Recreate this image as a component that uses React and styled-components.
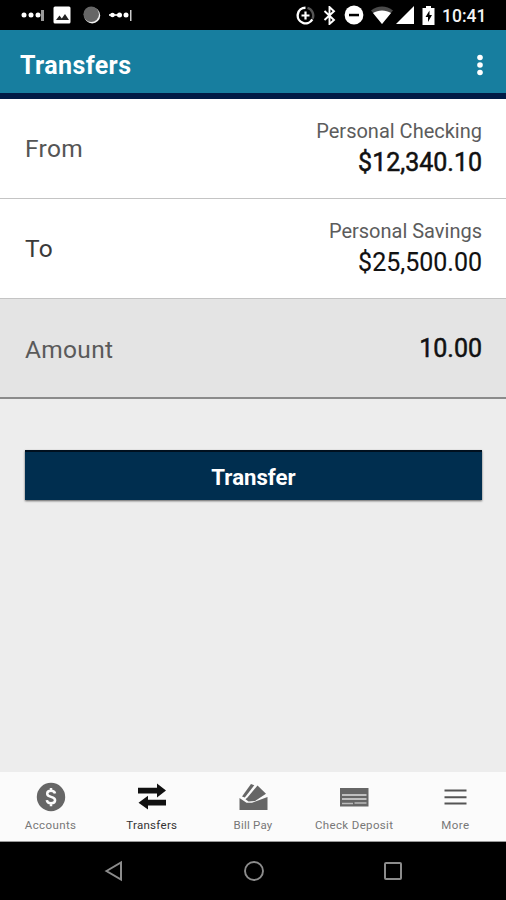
import React from "react";
import styled, { createGlobalStyle } from "styled-components";

const GlobalStyle = createGlobalStyle`
  * {
    box-sizing: border-box;
  }
  body {
    margin: 0;
    background: #000;
    font-family: Roboto, sans-serif;
  }
`;

const navItems = [
  { label: "Accounts", icon: <AccountsIcon />, spacing: "0.4px" },
  { label: "Transfers", icon: <TransfersIcon />, active: true, spacing: "0.3px" },
  { label: "Bill Pay", icon: <BillPayIcon />, spacing: "0.2px" },
  { label: "Check Deposit", icon: <CheckIcon />, spacing: "0.35px" },
  { label: "More", icon: <MoreIcon />, spacing: "0.5px" },
];

function App() {
  return (
    <Screen>
      <GlobalStyle />
      <StatusBar>
        <StatusLeft>
          <svg width="24" height="14" viewBox="0 0 24 14" fill="#fff">
            <circle cx="3" cy="7" r="2.5" />
            <circle cx="10" cy="7" r="2.5" />
            <circle cx="17" cy="7" r="2.5" />
            <rect x="20" y="2" width="3" height="11" fill="#999" />
          </svg>
          <svg width="18" height="18" viewBox="0 0 18 18">
            <rect x="0.5" y="0.5" width="17" height="17" rx="1.5" fill="#fff" />
            <path d="M3 14l3.5-4.5 2.3 3L12 8l4 6z" fill="#222" />
          </svg>
          <svg width="18" height="18" viewBox="0 0 18 18">
            <circle cx="9.2" cy="9.4" r="8" fill="#f2f2f2" />
            <circle cx="8.2" cy="8.2" r="7.8" fill="#666" />
          </svg>
          <svg width="24" height="14" viewBox="0 0 24 14" fill="#fff">
            <path d="M0 6.2h10v1.6H0z" />
            <circle cx="3.5" cy="7" r="2.3" />
            <circle cx="10.5" cy="7" r="2.5" />
            <circle cx="17" cy="7" r="2.5" />
            <rect x="21" y="2" width="1.5" height="11" fill="#ccc" />
          </svg>
        </StatusLeft>
        <StatusRight>
          <svg width="19" height="19" viewBox="0 0 19 19" fill="none">
            <path d="M9.5 1.7a7.8 7.8 0 1 0 6.8 11.6" stroke="#fff" strokeWidth="2.4" />
            <path d="M11.5 1.9a7.8 7.8 0 0 1 5 10.8" stroke="#555" strokeWidth="2.4" />
            <path d="M9.5 5.5v8M5.5 9.5h8" stroke="#fff" strokeWidth="2.2" />
          </svg>
          <BluetoothIcon width="13" height="19" viewBox="0 0 13 19" fill="none">
            <path
              d="M1.5 5l9.5 9-4.5 4V1L11 5.2 1.5 14"
              stroke="#fff"
              strokeWidth="1.9"
            />
          </BluetoothIcon>
          <MinusIcon width="20" height="20" viewBox="0 0 20 20">
            <circle cx="10" cy="10" r="9.4" fill="#fff" />
            <rect x="5" y="8.8" width="10" height="2.5" fill="#000" />
          </MinusIcon>
          <WifiIcon width="22" height="18" viewBox="0 0 22 18">
            <path d="M0 4.6C6.5-1 15.5-1 22 4.6L11 18z" fill="#4a4a4a" />
            <path d="M2 7C7 3.500 15 3.500 20 7L11 18z" fill="#fff" />
          </WifiIcon>
          <SignalIcon width="18" height="18" viewBox="0 0 18 18">
            <path d="M18 0v18H0z" fill="#fff" />
          </SignalIcon>
          <BatteryIcon width="13" height="19" viewBox="0 0 13 19">
            <path d="M4 0h5v2h3.5v17H.5V2H4z" fill="#fff" />
            <path d="M7.5 4.5L3.5 11H6v5l4-7H7.5z" fill="#000" />
          </BatteryIcon>
          <Clock>10:41</Clock>
        </StatusRight>
      </StatusBar>

      <Header>
        <Title>Transfers</Title>
        <svg width="6" height="22" viewBox="0 0 6 22" fill="#fff">
          <circle cx="3" cy="3.5" r="2.8" />
          <circle cx="3" cy="11" r="2.8" />
          <circle cx="3" cy="18.5" r="2.8" />
        </svg>
      </Header>

      <Row>
        <RowLabel $color="#555">From</RowLabel>
        <Account>
          <AccountName>Personal Checking</AccountName>
          <Money $strong>$12,340.10</Money>
        </Account>
      </Row>
      <Row>
        <RowLabel $color="#3a3a3a">To</RowLabel>
        <Account>
          <AccountName>Personal Savings</AccountName>
          <Money>$25,500.00</Money>
        </Account>
      </Row>
      <AmountRow>
        <RowLabel $color="#5a5a5a">Amount</RowLabel>
        <Money $strong>10.00</Money>
      </AmountRow>

      <Content>
        <TransferButton>Transfer</TransferButton>
      </Content>

      <BottomNav>
        {navItems.map((item) => (
          <NavItem key={item.label} $active={item.active}>
            {item.icon}
            <NavLabel $spacing={item.spacing} $active={item.active}>
              {item.label}
            </NavLabel>
          </NavItem>
        ))}
      </BottomNav>

      <SystemBar>
        <svg width="20" height="22" viewBox="0 0 20 22" fill="none">
          <path d="M2.5 11L17 2.500v17z" stroke="#8c8c8c" strokeWidth="2" />
        </svg>
        <svg width="22" height="22" viewBox="0 0 22 22" fill="none">
          <circle cx="11" cy="11" r="9" stroke="#8c8c8c" strokeWidth="1.9" />
        </svg>
        <svg width="20" height="22" viewBox="0 0 20 22" fill="none">
          <rect x="2" y="3" width="16" height="16" rx="1" stroke="#8c8c8c" strokeWidth="2" />
        </svg>
      </SystemBar>
    </Screen>
  );
}

function AccountsIcon() {
  return (
    <svg width="30" height="30" viewBox="0 0 30 30" fill="none">
      <circle cx="15" cy="15" r="14.2" fill="currentColor" />
      <path
        d="M19 11.5c-.4-1.900-1.900-2.700-4-2.700-2.300 0-3.800 1-3.800 2.900 0 4.300 7.900 2 7.900 6.500 0 1.900-1.700 3-4.100 3-2.300 0-3.900-1-4.200-3.100M15 6v3M15 21v3.200"
        stroke="#fbfbfb"
        strokeWidth="2.5"
      />
    </svg>
  );
}

function TransfersIcon() {
  return (
    <svg width="30" height="30" viewBox="0 0 30 30" fill="currentColor">
      <path d="M1 5.700h19V1.500L29 8.500l-9 7v-4H1z" />
      <path d="M29 17.700H11v-4l-9.500 7 9.500 6.800v-4h18z" />
    </svg>
  );
}

// envelope with two bills sticking out of it
function BillPayIcon() {
  return (
    <svg width="30" height="30" viewBox="0 0 30 30" fill="currentColor">
      <path d="M1.500 16l7 4.800h5.500L29.500 15v13H1.500z" />
      <path d="M4 14.500L13 2l3.300 1.300-9.500 12.200z" />
      <path d="M9.500 15.500L19.500 3.500l8.500 8.300-11 7.200-6.500.5-3-2.200z" />
    </svg>
  );
}

function CheckIcon() {
  return (
    <svg width="30" height="30" viewBox="0 0 30 30">
      <rect x="1" y="6" width="28.500" height="18.500" fill="currentColor" />
      <path d="M3 13h24.500M3 17h24.500" stroke="#ddd" strokeWidth="1.500" />
      <path d="M3 21.500h11M15.500 21h12" stroke="#bbb" strokeWidth="1.300" />
    </svg>
  );
}

function MoreIcon() {
  return (
    <svg width="30" height="30" viewBox="0 0 30 30">
      <path d="M4.500 8.500h22M4.500 15.200h22M4.500 21.500h22" stroke="#555" strokeWidth="2" />
    </svg>
  );
}

const Screen = styled.div`
  display: flex;
  flex-direction: column;
  width: 506px;
  height: 900px;
  background: #ededed;
  overflow: hidden;
`;

const StatusBar = styled.div`
  display: flex;
  align-items: center;
  justify-content: space-between;
  height: 30px;
  padding: 0 20px 0 21px;
  background: #000;
  svg {
    flex-shrink: 0;
  }
`;

const StatusLeft = styled.div`
  display: flex;
  align-items: center;
  gap: 8px;
  svg:nth-child(3) {
    margin-left: 4px;
  }
`;

const StatusRight = styled.div`
  display: flex;
  align-items: center;
`;

const BluetoothIcon = styled.svg`
  margin-left: 8px;
`;

const MinusIcon = styled.svg`
  margin-left: 8px;
`;

const WifiIcon = styled.svg`
  margin-left: 7px;
`;

const SignalIcon = styled.svg`
  margin-left: 3px;
`;

const BatteryIcon = styled.svg`
  margin-left: 8px;
`;

const Clock = styled.span`
  width: 44px;
  margin-left: 7px;
  color: #f4f4f4;
  font-size: 17.5px;
  font-weight: 500;
  line-height: 30px;
  padding-top: 1px;
`;

const Header = styled.header`
  display: flex;
  align-items: center;
  justify-content: space-between;
  height: 69px;
  padding: 6px 23px 0 20px;
  background: #177e9f;
  border-bottom: 6px solid #001b45;
`;

const Title = styled.h1`
  margin: 2px 0 0;
  color: #fff;
  font-size: 25px;
  font-weight: 700;
  letter-spacing: 0.4px;
`;

const Row = styled.section`
  display: flex;
  align-items: center;
  justify-content: space-between;
  height: 100px;
  padding: 0 24px 0 25px;
  background: #fff;
  border-bottom: 1px solid #c4c4c4;
`;

const AmountRow = styled(Row)`
  padding-top: 2px;
  background: #e4e4e4;
  border-bottom: 2px solid #8b8b8b;
`;

const RowLabel = styled.span`
  color: ${(props) => props.$color};
  font-size: 24.5px;
  letter-spacing: 0.3px;
`;

const Account = styled.div`
  text-align: right;
  padding-bottom: 2px;
`;

const AccountName = styled.div`
  color: #5c5c5c;
  font-size: 20px;
  line-height: 30px;
`;

const Money = styled.div`
  color: #111;
  font-size: 25px;
  font-weight: 400;
  -webkit-text-stroke: ${(props) => (props.$strong ? "0.5px #111" : "0.15px #111")};
  line-height: 34px;
`;

const Content = styled.main`
  flex: 1;
  padding: 51px 24px 0 25px;
`;

const TransferButton = styled.button`
  display: block;
  width: 100%;
  height: 50px;
  padding: 2px 0 0;
  border: 0;
  border-top: 2px solid #00101f;
  background: #002e4f;
  box-shadow: 0 1px 2px rgba(0, 0, 0, 0.6);
  color: #fff;
  font-family: inherit;
  font-size: 22.2px;
  font-weight: 700;
`;

const BottomNav = styled.nav`
  display: grid;
  grid-template-columns: repeat(5, 1fr);
  height: 70px;
  background: #fbfbfb;
  border-bottom: 1px solid #999;
`;

const NavItem = styled.div`
  display: flex;
  flex-direction: column;
  align-items: center;
  padding-top: 10px;
  color: ${(props) => (props.$active ? "#111" : "#666")};
`;

const NavLabel = styled.span`
  margin-top: 6px;
  color: ${(props) => (props.$active ? "#333" : "#777")};
  font-size: 11.5px;
  line-height: 14px;
  letter-spacing: ${(props) => props.$spacing};
  white-space: nowrap;
`;

const SystemBar = styled.div`
  display: flex;
  justify-content: space-between;
  height: 58px;
  padding: 18px 103px 0 104px;
  background: #000;
`;

export default App;
